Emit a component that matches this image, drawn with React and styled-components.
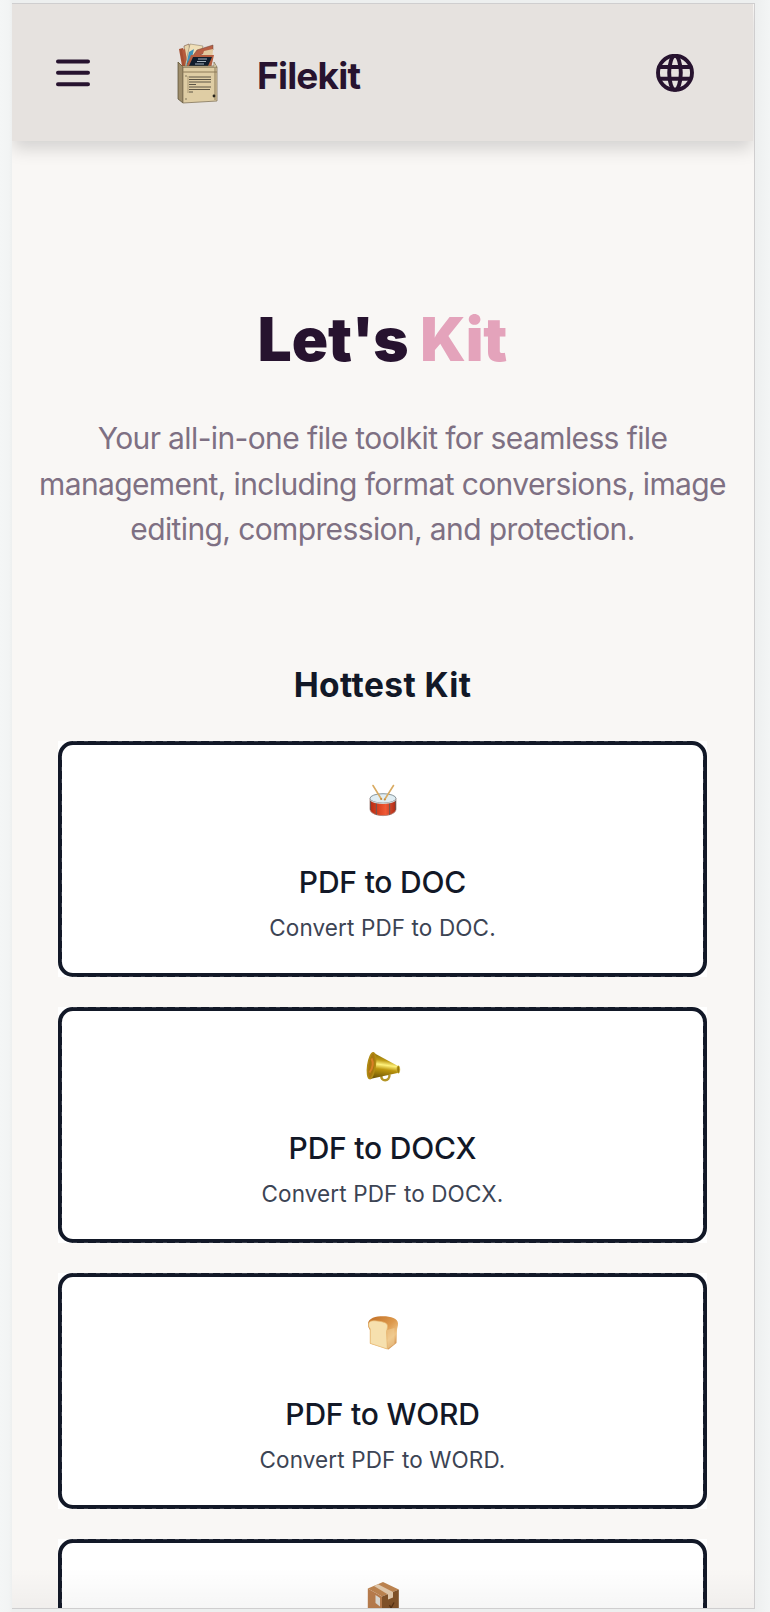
import React from "react";
import styled, { createGlobalStyle } from "styled-components";

const GlobalStyle = createGlobalStyle`
  * { box-sizing: border-box; }
  body {
    margin: 0;
    background: #f2f4f4;
    font-family: Inter, "Liberation Sans", sans-serif;
    -webkit-font-smoothing: antialiased;
  }
  h1, h2, h3, p { margin: 0; }
`;

const Desk = styled.div`
  height: 1612px;
  padding: 3px 15px 3px 12px;
  overflow: hidden;
  background: linear-gradient(90deg, #f4f6f6 0, #f2f4f4 9px, #edefef 12px, #edefef 755px, #f3f5f5 770px);
`;

const Viewport = styled.div`
  width: 743px;
  height: 1606px;
  border: 1px solid #cfcecf;
  border-left: 0;
  background: #f9f7f5;
  overflow: hidden;
  position: relative;
  padding-right: 1px;

  &::after {
    content: "";
    position: absolute;
    inset: auto 0 0;
    height: 40px;
    background: linear-gradient(rgba(0, 0, 0, 0), rgba(0, 0, 0, 0.035));
  }
`;

const Header = styled.header`
  height: 137px;
  display: flex;
  align-items: center;
  padding: 0 59px 0 44px;
  background: #e6e2df;
  box-shadow: 0 9px 16px -1px rgba(0, 0, 0, 0.15);
  color: #27132f;
`;

const IconButton = styled.button`
  display: flex;
  padding: 0;
  border: 0;
  background: none;
  color: inherit;
  margin: 0 0 0 ${(p) => p.$push || "0"};
`;

const Brand = styled.div`
  display: flex;
  align-items: center;
  gap: 38px;
  margin-left: 87px;
`;

const BrandName = styled.span`
  font-size: 37px;
  font-weight: 650;
  line-height: 44px;
  letter-spacing: -0.8px;
  padding-top: 6px;
`;

const Hero = styled.section`
  padding-top: 161px;
  text-align: center;
`;

const HeroTitle = styled.h1`
  font-size: 60px;
  font-weight: 900;
  line-height: 74px;
  letter-spacing: -0.1px;
  color: #27132f;
`;

const Accent = styled.span`
  color: #e4a3bb;
`;

const HeroText = styled.p`
  margin-top: 40px;
  font-size: 30px;
  font-weight: 400;
  line-height: 45.5px;
  letter-spacing: -0.62px;
  color: #7e7083;
  white-space: nowrap;
`;

const Tools = styled.section`
  padding: 112px 46px 0;
  text-align: center;
`;

const SectionTitle = styled.h2`
  font-size: 33.5px;
  font-weight: 700;
  line-height: 40px;
  letter-spacing: 0.4px;
  color: #121827;
`;

const CardList = styled.div`
  display: grid;
  gap: 30px;
  margin-top: 36px;
`;

const dash = "rgba(255,255,255,.16) 0 4px, transparent 4px 11.3px";

const Card = styled.article`
  height: 236px;
  background: #fff;
  position: relative;

  &::after {
    content: "";
    position: absolute;
    inset: 0 3px;
    background:
      repeating-linear-gradient(90deg, ${dash}) 12px 0 / calc(100% - 24px) 1px no-repeat,
      repeating-linear-gradient(90deg, ${dash}) 12px 100% / calc(100% - 24px) 1px no-repeat,
      repeating-linear-gradient(${dash}) 0 15px / 1px calc(100% - 30px) no-repeat,
      repeating-linear-gradient(${dash}) 100% 15px / 1px calc(100% - 30px) no-repeat;
  }
`;

const CardFace = styled.div`
  height: 100%;
  border: 4px solid #121827;
  border-radius: 15px;
  display: flex;
  flex-direction: column;
  align-items: center;
  padding-top: 38px;
`;

const CardTitle = styled.h3`
  margin-top: 45px;
  font-size: 30px;
  font-weight: 500;
  line-height: 36px;
  letter-spacing: -0.2px;
  color: #121827;
`;

const CardText = styled.p`
  margin-top: 14px;
  font-size: 22.5px;
  line-height: 28px;
  letter-spacing: 0.12px;
  color: #3c4454;
`;

const MenuIcon = () => (
  <svg width="34" height="28" viewBox="0 0 34 28" stroke="currentColor" strokeWidth="4" strokeLinecap="round">
    <path d="M2 2.4H32M2 13.8H32M2 25.2H32" />
  </svg>
);

const GlobeIcon = () => (
  <svg width="38" height="38" viewBox="0 0 38 38" fill="none" stroke="currentColor" strokeWidth="3.9">
    <circle cx="19" cy="18.8" r="17" />
    <ellipse cx="19" cy="18.8" rx="5.8" ry="17" />
    <path d="M3 13H35M3 24.7H35" />
  </svg>
);

const Logo = () => (
  <svg width="42" height="62" viewBox="0 0 42 62">
    <path d="M2 7 6 6 10 24 5 24Z" fill="#a64f32" />
    <path d="M7 4 12 2 15 24 9 24Z" fill="#e6d3aa" stroke="#75533e" strokeWidth=".6" />
    <path d="M5 8 8 7 11 24 8 24Z" fill="#b65b3c" />
    <path d="M13 2 26 4 20 24 8 24Z" fill="#f0dfb7" stroke="#807058" strokeWidth=".5" />
    <path d="M12 10 17 7 14 20 9 24Z" fill="#3f92b8" />
    <path d="M20 8 36 3 36 8 23 13 14 23 10 22Z" fill="#b85f44" stroke="#6c4438" strokeWidth=".5" />
    <path d="M27 9 36 7 35 20 23 21Z" fill="#e3caa0" />
    <path d="M14 13 37 13 34 26 9 26Z" fill="#b65f40" />
    <path d="M16 15 35 15 31 24 12 24Z" fill="#101d2d" />
    <path d="M21 17H30M20 19.5H29M18 22H27" stroke="#a8b3bd" strokeWidth="1" />
    <path d="M1 20 6 25 6 61 1 57Z" fill="#9e8d6b" stroke="#51472f" strokeWidth=".7" />
    <path d="M6 25H40V59L6 61Z" fill="#dfcda4" stroke="#83755a" strokeWidth=".8" />
    <path d="M1 20 6 25H40L37 20 37 24H5Z" fill="#eee0bd" stroke="#70613f" strokeWidth=".6" />
    <path d="M5 30H40" stroke="#8d7b58" strokeWidth="1" />
    <path d="M38 26V58" stroke="#8d7b58" strokeWidth="1" />
    <path d="M12 35H34M12 37.5H34M12 40H34M12 42.5H19M12 45H34M12 47.5H33M12 50H16" stroke="#5d5545" strokeWidth="1" />
    <path d="M11 34V51" stroke="#8d7b58" strokeWidth=".6" />
    <circle cx="37" cy="54" r="1.4" fill="#28251d" />
    <circle cx="9" cy="34" r=".7" fill="#62563e" />
    <circle cx="9" cy="57" r=".7" fill="#62563e" />
  </svg>
);

const Glyph = styled.svg`
  width: 36px;
  height: 36px;
  flex: none;
`;

const Drum = () => (
  <Glyph viewBox="0 0 36 36">
    <defs>
      <linearGradient id="drum">
        <stop offset="0" stopColor="#b52a12" />
        <stop offset=".3" stopColor="#d8401f" />
        <stop offset=".6" stopColor="#f05a36" />
        <stop offset="1" stopColor="#a82814" />
      </linearGradient>
    </defs>
    <path d="M4.9 15V26C5 35 31 35 31.1 26V15Z" fill="url(#drum)" />
    <path d="M5 27C7 34.5 29 34.5 31 27" fill="none" stroke="#b08b84" strokeWidth=".8" />
    <path d="M5.3 16V27M11.3 19V32M24.7 19V32M30.7 16V27" stroke="#665958" strokeWidth="1" />
    <ellipse cx="18" cy="15.4" rx="13" ry="4.7" fill="#e0edf3" stroke="#89969b" strokeWidth="1" />
    <path d="M5.2 17C8 21.5 28 21.5 30.8 17" fill="none" stroke="#d3dbdc" strokeWidth="1" />
    <path d="M8 2.5 16 15.5M28.5 2.5 20 16" stroke="#d9ab62" strokeWidth="1.6" strokeLinecap="round" />
    <circle cx="16.2" cy="16" r="1.1" fill="#c38c3d" />
    <circle cx="19.8" cy="16.5" r="1.1" fill="#c38c3d" />
  </Glyph>
);

const Megaphone = () => (
  <Glyph viewBox="0 -1.5 36 36">
    <defs>
      <linearGradient id="brass" x1=".4" x2=".25" y2="1">
        <stop stopColor="#7c6308" />
        <stop offset=".28" stopColor="#bd9a15" />
        <stop offset=".45" stopColor="#fff27c" />
        <stop offset=".62" stopColor="#bd960d" />
        <stop offset="1" stopColor="#685006" />
      </linearGradient>
    </defs>
    <path d="M16.5 25C15 31 25 32 24.5 24" fill="none" stroke="#b49526" strokeWidth="2.4" />
    <path d="M8 2 33 15.5C35 17 34.5 22 32.5 22.5L5 28.5Z" fill="url(#brass)" />
    <ellipse cx="6.5" cy="15.2" rx="3.7" ry="13" transform="rotate(8 6.5 15.2)" fill="#a9770f" stroke="#b08b14" strokeWidth="1.6" />
    <path d="M6.5 8C9 13 7.5 18 4.5 22" fill="none" stroke="#d98025" strokeWidth="2" />
    <ellipse cx="33.3" cy="19" rx="1.5" ry="3.7" fill="#9a7a0b" stroke="#d9bd3c" strokeWidth=".6" />
  </Glyph>
);

const Bread = () => (
  <Glyph viewBox="0 0 36 36">
    <defs>
      <linearGradient id="crust" x1=".3" x2="1" y2=".9">
        <stop stopColor="#c8792f" />
        <stop offset=".4" stopColor="#dd9a4e" />
        <stop offset=".7" stopColor="#efc486" />
        <stop offset="1" stopColor="#c98440" />
      </linearGradient>
    </defs>
    <path d="M3 9C3 3 11 1.3 18 1.3C26 1.3 33 3.5 33 8.5C33 12 32 13 32 15L31.5 28L23.5 34.5L5 28.5V15C3.5 13 3 11 3 9Z" fill="url(#crust)" />
    <path d="M3.6 9C4 5.5 8 5.5 12 6C17 6.5 22.5 7.5 22.5 11C22.5 14 21.5 15 21.5 17L22.3 34L5.2 28.4V14C4 12 3.4 11 3.6 9Z" fill="#f6e0ae" stroke="#e6b873" strokeWidth=".7" />
    <path d="M22 15 29.5 13V29L22.8 33.5Z" fill="#f0cf98" opacity=".55" />
  </Glyph>
);

const Package = () => (
  <Glyph viewBox="0 0 36 36">
    <path d="M2.8 7.5 18 1 33.8 8.5 17 15.5Z" fill="#bd8450" />
    <path d="M2.8 7.5 17 15.5V38L2.8 34Z" fill="#b97d4d" />
    <path d="M17 15.5 33.8 8.5V34L17 39Z" fill="#825329" />
    <path d="M9 5 13 3.2 28 11V16.5L23 18.5V13.5Z" fill="#e2c9ac" />
    <path d="M10.5 14 15 17V25.5L10.5 22Z" fill="#dedbd4" />
    <path d="M24.5 24 26 27 29 21.5" fill="none" stroke="#573214" strokeWidth="1.3" />
  </Glyph>
);

const tools = [
  { icon: <Drum />, title: "PDF to DOC", text: "Convert PDF to DOC." },
  { icon: <Megaphone />, title: "PDF to DOCX", text: "Convert PDF to DOCX." },
  { icon: <Bread />, title: "PDF to WORD", text: "Convert PDF to WORD." },
  { icon: <Package /> },
];

export default function App() {
  return (
    <>
      <GlobalStyle />
      <Desk>
        <Viewport>
          <Header>
            <IconButton aria-label="Menu"><MenuIcon /></IconButton>
            <Brand>
              <Logo />
              <BrandName>Filekit</BrandName>
            </Brand>
            <IconButton aria-label="Language" $push="auto"><GlobeIcon /></IconButton>
          </Header>
          <Hero>
            <HeroTitle>Let's <Accent>Kit</Accent></HeroTitle>
            <HeroText>
              Your all-in-one file toolkit for seamless file<br />
              management, including format conversions, image<br />
              editing, compression, and protection.
            </HeroText>
          </Hero>
          <Tools>
            <SectionTitle>Hottest Kit</SectionTitle>
            <CardList>
              {tools.map((tool, i) => (
                <Card key={i}>
                  <CardFace>
                    {tool.icon}
                    {tool.title && <CardTitle>{tool.title}</CardTitle>}
                    {tool.text && <CardText>{tool.text}</CardText>}
                  </CardFace>
                </Card>
              ))}
            </CardList>
          </Tools>
        </Viewport>
      </Desk>
    </>
  );
}
